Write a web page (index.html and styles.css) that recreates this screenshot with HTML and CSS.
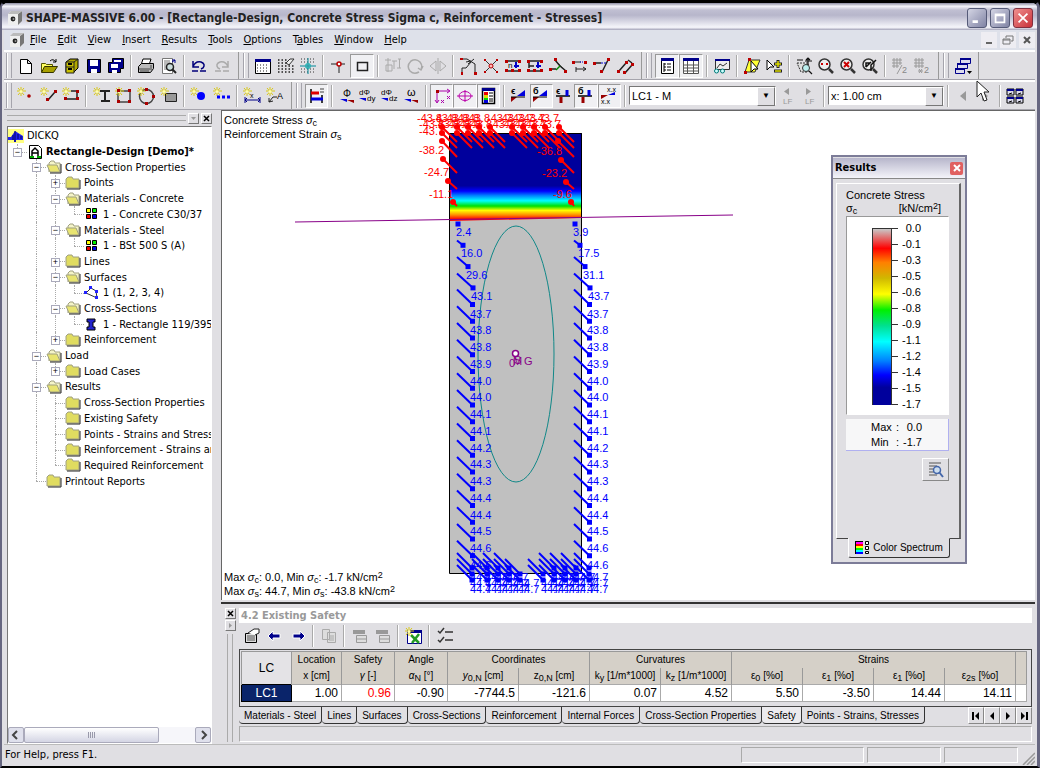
FILE: index.html
```
<!doctype html>
<html lang="en">
  <head>
    <meta charset="utf-8">
    <meta name="viewport" content="width=device-width, initial-scale=1">
    <link rel="stylesheet" href="styles.css">
    <title>SHAPE-MASSIVE 6.00</title>
  </head>
  <body>
    <!-- shared icon parts -->
    <svg class="defs" aria-hidden="true">
      <symbol id="app" viewBox="0 0 16 16"><path d="M1 4l3-3h11v9l-3 5H1z" fill="#eee"/><path d="M11 4l4-3v10l-4 4z" fill="#777"/><path d="M1 4l3-3h11l-4 3z" fill="#bbb"/><circle cx="6" cy="9" r="2.4" fill="#222"/><circle cx="6.500" cy="9" r="1" fill="#999"/></symbol>
      <symbol id="star" viewBox="0 0 18 18"><path d="M4 0v9M0 4h9M1 1l6 7M7 1L1 8" stroke="#d8c818"/><circle cx="4" cy="4.500" r="1.500" fill="#ffffb0"/></symbol>
      <symbol id="folder" viewBox="0 0 16 14"><path d="M1 12V3l2-2h4l1 2h6v9z" fill="#e0dc60" stroke="#a0a080"/><path d="M2 13h13V4" fill="none" stroke="#222"/></symbol>
      <symbol id="open" viewBox="0 0 16 14"><path d="M3 12V3l2-2h3l1 2h5v9" fill="#f4f4c8" stroke="#a0a080"/><path d="M1 5h10l3 7H4z" fill="#e8e470" stroke="#a0a080"/><path d="M4 13h11V4" fill="none" stroke="#222"/></symbol>
      <symbol id="material" viewBox="0 0 16 14"><g stroke="#000"><path d="M2.500 1.500h4v4h-4z" fill="#ff0"/><path d="M8.500 1.500h4v4h-4z" fill="#0e0"/><path d="M2.500 7.500h4v4h-4z" fill="#e00"/><path d="M8.500 7.500h4v4h-4z" fill="#00e"/></g></symbol>
      <symbol id="lens" viewBox="0 0 18 18"><circle cx="7.500" cy="7.500" r="5.500" fill="#eee" stroke="#333" stroke-width="1.500"/><path d="M12 12l4 4" stroke="#333" stroke-width="2.500"/></symbol>
    </svg>

    <div class="window">
      <header class="titlebar">
        <svg class="app-icon"><use href="#app"/></svg>
        <h1>SHAPE-MASSIVE 6.00 - [Rectangle-Design, Concrete Stress Sigma c, Reinforcement - Stresses]</h1>
        <button class="win" aria-label="Minimize"><svg viewBox="0 0 18 18"><path d="M4 13h6" stroke="#fff" stroke-width="3"/></svg></button>
        <button class="win" aria-label="Maximize"><svg viewBox="0 0 18 18"><path d="M4 5h10v9H4zM4 6h10" fill="none" stroke="#fff" stroke-width="2"/></svg></button>
        <button class="win close" aria-label="Close"><svg viewBox="0 0 18 18"><path d="M4 4l10 10M14 4L4 14" stroke="#fff" stroke-width="2"/></svg></button>
      </header>

      <nav class="menubar">
        <svg class="app-icon"><use href="#app"/></svg>
        <a href="#"><u>F</u>ile</a><a href="#"><u>E</u>dit</a><a href="#"><u>V</u>iew</a><a href="#"><u>I</u>nsert</a><a href="#"><u>R</u>esults</a><a href="#"><u>T</u>ools</a><a href="#"><u>O</u>ptions</a><a href="#">T<u>a</u>bles</a><a href="#"><u>W</u>indow</a><a href="#"><u>H</u>elp</a>
        <span class="mdi">
          <button aria-label="Minimize document"><svg viewBox="0 0 16 16"><path d="M5 11h6" stroke="#666" stroke-width="2"/></svg></button>
          <button aria-label="Restore document"><svg viewBox="0 0 16 16"><path d="M6 4h7v5h-2M6 4v2M3 7h7v5H3zM3 8h7" fill="none" stroke="#777"/></svg></button>
          <button aria-label="Close document"><svg viewBox="0 0 16 16"><path d="M5 5l6 6M11 5l-6 6" stroke="#555" stroke-width="2"/></svg></button>
        </span>
      </nav>

      <div class="toolrow">
        <div class="bar file-bar">
          <i class="grip"></i>
          <button aria-label="New"><svg viewBox="0 0 18 18"><path d="M3.500 2.500h7l4 4v10h-11zM10.500 2.500v4h4" fill="#fff" stroke="#000"/></svg></button>
          <button aria-label="Open"><svg viewBox="0 0 18 18"><path d="M1.500 15V6.500h4l1 1h6V10" fill="#ffff60" stroke="#555500"/><path d="M1.500 15.500l3-6h13l-4 6z" fill="#a8a000" stroke="#333300"/><path d="M10 4q3-3 6 1M16 2v3h-3" fill="none" stroke="#000"/></svg></button>
          <button aria-label="Archive"><svg viewBox="0 0 18 18"><path d="M4 5l4-3h8v9l-4 4H4z" fill="#b0a800" stroke="#000"/><path d="M4 5h8v11H4zM4 10h8M12 5l4-3" fill="#c8c000" stroke="#222"/><path d="M6 7h4M6 12h4" stroke="#000" stroke-width="2"/></svg></button>
          <button aria-label="Save"><svg viewBox="0 0 18 18"><path d="M2.500 2.500h13v13h-13z" fill="#00008b" stroke="#000"/><path d="M5 3h8v6H5zM6 12h6v4H6z" fill="#fff"/></svg></button>
          <button aria-label="Save all"><svg viewBox="0 0 18 18"><path d="M5.500 1.500h11v10h-3v4h-12v-10h4z" fill="#00008b" stroke="#000"/><path d="M7 3h7v2H7zM4 7h7v4H4zM5 13h5v3H5z" fill="#fff"/></svg></button>
          <i class="sep"></i>
          <button aria-label="Print"><svg viewBox="0 0 18 18"><path d="M6 2h8l-2 6H4z" fill="#fff" stroke="#000"/><path d="M1.500 9.500l3-3h12v5l-3 4h-12z" fill="#bbb" stroke="#000"/><path d="M2 12h11M14 8v5M3 14h9" stroke="#444"/></svg></button>
          <button aria-label="Preview"><svg viewBox="0 0 18 18"><path d="M2.500 1.500h10v15h-10z" fill="#fff" stroke="#777"/><path d="M4 4h6M4 6h6M4 8h3M4 10h3M4 12h3" stroke="#777"/><circle cx="10" cy="10" r="3.500" fill="#cdd" stroke="#222" stroke-width="1.500"/><path d="M12 12l4 4" stroke="#222" stroke-width="2"/><path d="M12 3h3v3M15 3l-3 2" stroke="#00008b" fill="none"/></svg></button>
          <i class="sep"></i>
          <button aria-label="Undo"><svg viewBox="0 0 18 18"><path d="M3 4v6h6M3 10q2-6 8-5q5 2 2 6l-2 1M2 14h6M10 14h6" fill="none" stroke="#00007a" stroke-width="1.500"/></svg></button>
          <button aria-label="Redo" disabled><svg viewBox="0 0 18 18"><path d="M15 4v6H9M15 10q-2-6-8-5q-5 2-2 6l2 1M2 14h6M10 14h6" fill="none" stroke="#aaa" stroke-width="1.500"/></svg></button>
        </div>
        <div class="bar edit-bar">
          <i class="grip"></i>
          <button aria-label="Grid window"><svg viewBox="0 0 18 18"><path d="M1.500 2.500h15v14h-15z" fill="#fff" stroke="#000"/><path d="M1 2h16v3H1z" fill="#00008b"/><path d="M3 8h12M3 11h12M3 14h12" stroke="#222" stroke-dasharray="1 2"/></svg></button>
          <button aria-label="Grid settings"><svg viewBox="0 0 18 18"><path d="M1 3h9M1 6h9M1 9h16M1 12h16M1 15h16" stroke="#222" stroke-width="1.500" stroke-dasharray="1.500 2"/><path d="M9 6l4-4 4 0-5 6z" fill="#eee" stroke="#333"/></svg></button>
          <button aria-label="Snap"><svg viewBox="0 0 18 18"><path d="M2 2h14M2 5h14M2 12h14M2 15h14" stroke="#333" stroke-dasharray="1 2"/><path d="M9 1v16M1 9h16" stroke="#089" /><path d="M7 7h4v4H7z" fill="none" stroke="#0aa"/></svg></button>
          <i class="sep"></i>
          <button aria-label="Node snap"><svg viewBox="0 0 18 18"><path d="M2 7h14M10 7v9" stroke="#222"/><circle cx="10" cy="7" r="2" fill="#fff" stroke="#b00" stroke-width="1.500"/></svg></button>
          <button class="on" aria-label="Rectangle"><svg viewBox="0 0 18 18"><path d="M4.500 5.500h10v8h-10z" fill="none" stroke="#222" stroke-width="1.500"/></svg></button>
          <i class="sep"></i>
          <button aria-label="Move" disabled><svg viewBox="0 0 18 18"><path d="M2 8h6v6H2zM1 3h6M4 1v14M8 4h5M10 4v8M14 2h3M15.500 2v9M13 11h4" fill="none" stroke="#aaa"/></svg></button>
          <button aria-label="Rotate" disabled><svg viewBox="0 0 18 18"><path d="M13 15q-5 3-9-1-4-5 1-10 5-3 9 1 3 4 1 7M12 11l3 2 2-4" fill="none" stroke="#aaa" stroke-width="1.500"/></svg></button>
          <button aria-label="Mirror" disabled><svg viewBox="0 0 18 18"><path d="M7 4L1 9l6 5zM11 4l6 5-6 5zM9 1v16" fill="none" stroke="#aaa"/></svg></button>
          <i class="sep"></i>
          <button aria-label="Connect"><svg viewBox="0 0 18 18"><path d="M2 2h6l8 5v9M3 16v-5h4l5-6M12 4l-5 1M9 7l6-5" fill="none" stroke="#222"/><path d="M1 1h3v2H1zM15 15h3v3h-3zM2 15h2v3H2z" fill="#b00"/></svg></button>
          <button aria-label="Intersect"><svg viewBox="0 0 18 18"><path d="M3 3l12 12M15 3L3 15" stroke="#333"/><path d="M2 2h2v2H2zM14 2h2v2h-2zM2 14h2v2H2zM14 14h2v2h-2z" fill="#b00"/><circle cx="9" cy="9" r="2" fill="#fbb" stroke="#b00"/></svg></button>
          <button aria-label="Divide by number"><svg viewBox="0 0 18 18"><path d="M2 4h14M2 14h14" stroke="#222" stroke-width="1.500"/><path d="M1 3h3v3H1zM14 3h3v3h-3zM1 12h3v3H1zM14 12h3v3h-3zM7 12h3v3H7z" fill="#b00"/><path d="M12 5v6M10 9h5" stroke="#00c" stroke-width="2"/><text x="4" y="11" font-size="8">n</text></svg></button>
          <button aria-label="Divide by distance"><svg viewBox="0 0 18 18"><path d="M2 4h14M2 14h14M3 6v5M3 9h5" stroke="#222" stroke-width="1.500"/><path d="M1 3h3v3H1zM14 3h3v3h-3zM1 12h3v3H1zM14 12h3v3h-3zM7 12h3v3H7z" fill="#b00"/><path d="M12 5v6M10 9h5" stroke="#00c" stroke-width="2"/></svg></button>
          <button aria-label="Fillet"><svg viewBox="0 0 18 18"><path d="M6 3l5 6 6 5M7 12H1" stroke="#222" stroke-width="1.500"/><path d="M11 9l-4 4" fill="none" stroke="#080" stroke-width="1.500"/><path d="M5 1h3v3H5zM15 13h3v3h-3zM0 11h3v3H0z" fill="#b00"/></svg></button>
          <button aria-label="Parallel"><svg viewBox="0 0 18 18"><path d="M2 5h8M5 10v5M5 12h10M12 10l3 2-3 2" stroke="#222" fill="none"/><path d="M9 5h5" stroke="#00c" stroke-dasharray="1 1"/><path d="M1 4h3v3H1zM13 4h3v3h-3z" fill="#b00"/></svg></button>
          <button aria-label="Extend"><svg viewBox="0 0 18 18"><path d="M2 6h6M15 3L9 15" stroke="#222" stroke-width="1.500"/><path d="M8 6h5" stroke="#00c" stroke-dasharray="2 1"/><path d="M0 5h3v3H0zM14 1h3v3h-3zM7 13h3v3H7z" fill="#b00"/></svg></button>
          <button aria-label="Offset"><svg viewBox="0 0 18 18"><path d="M3 14l7-8M9 16l7-8M12 3l4 3" stroke="#222" stroke-width="1.500"/><path d="M1 13h3v3H1zM9 4h3v3H9zM7 14h3v3H7zM15 6h3v3h-3z" fill="#b00"/></svg></button>
        </div>
        <div class="bar view-bar">
          <i class="grip"></i>
          <button class="on" aria-label="Navigator"><svg viewBox="0 0 18 18"><path d="M3.500 1.500h12v15h-12z" fill="#fff" stroke="#000"/><path d="M3 1h13v3H3z" fill="#00008b"/><path d="M6 6v9M6 7h2M9 7h4M6 10h2M9 10h4M6 13h2M9 13h4" stroke="#000"/></svg></button>
          <button class="on" aria-label="Tables"><svg viewBox="0 0 18 18"><path d="M1.500 1.500h15v15h-15zM5.500 4v12M11.500 4v12M2 8h14M2 11h14M2 14h14" fill="#fff" stroke="#555"/><path d="M1 1h16v3H1z" fill="#00008b"/></svg></button>
          <i class="sep"></i>
          <button aria-label="View options"><svg viewBox="0 0 18 18"><path d="M2.500 2.500h14v10h-14z" fill="#eee" stroke="#333"/><path d="M2 2h15v2H2z" fill="#00008b"/><path d="M4 11l3-4 3 2 4-3" fill="none" stroke="#333"/><circle cx="3.500" cy="14" r="2" fill="#cff" stroke="#077"/><circle cx="9.500" cy="14" r="2" fill="#cff" stroke="#077"/></svg></button>
          <i class="sep"></i>
          <button aria-label="Select"><svg viewBox="0 0 18 18"><path d="M2 15L6 3h11l-5 12z" fill="#ff3" stroke="#333"/><path d="M8 4v11l3-3h4z" fill="#fff" stroke="#000"/><path d="M1 14h3v3H1zM5 1h3v3H5z" fill="#b00"/></svg></button>
          <button aria-label="Add to selection"><svg viewBox="0 0 18 18"><path d="M2 3v10l3-3h4z" fill="#fff" stroke="#000"/><path d="M13 3v8M9 7h8M9 14h8" stroke="#222" stroke-width="3"/><path d="M13 4v6M10 7h6M10 14h6" stroke="#dd0" stroke-width="1.500"/></svg></button>
          <i class="sep"></i>
          <button aria-label="Pan"><svg viewBox="0 0 18 18"><path d="M2 6h11v9H6z" fill="#ddd" stroke="#333" stroke-dasharray="2 1"/><circle cx="11" cy="11" r="3.500" fill="#bee" stroke="#333"/><path d="M13 1v7M10 4h7M11 3l2-2 2 2M2 3h6M14 14l3 3" fill="none" stroke="#111" stroke-width="1.200"/></svg></button>
          <button aria-label="Zoom window"><svg viewBox="0 0 18 18"><use href="#lens"/><path d="M4 7h7" stroke="#c00" stroke-width="2" stroke-dasharray="2 3"/></svg></button>
          <button aria-label="Zoom out"><svg viewBox="0 0 18 18"><use href="#lens"/><path d="M5 5l5 5M10 5l-5 5" stroke="#c00" stroke-width="2"/></svg></button>
          <button aria-label="Previous view"><svg viewBox="0 0 18 18"><use href="#lens"/><path d="M5 10V6h4M5 10l5-5M15 3l-5 5v6" stroke="#111" stroke-width="1.500" fill="none"/></svg></button>
          <i class="sep"></i>
          <button aria-label="Half grid" disabled><svg viewBox="0 0 18 18"><path d="M1 3h10M1 6h10M1 9h7M3 1v10M6 1v10M9 1v7M11 8l-5 9" stroke="#999"/><text x="11" y="16" font-size="9" fill="#888">2</text></svg></button>
          <button aria-label="Double grid" disabled><svg viewBox="0 0 18 18"><path d="M1 3h10M1 6h10M1 9h10M3 1v10M6 1v10M9 1v10M5 14h5M6 12l3 4M9 12l-3 4" stroke="#999"/><text x="11" y="16" font-size="9" fill="#888">2</text></svg></button>
        </div>
        <div class="bar cascade-bar">
          <i class="grip"></i>
          <button aria-label="Windows"><svg viewBox="0 0 18 18"><g fill="#dde" stroke="#00008b"><path d="M6.500 1.500h10v5h-10z"/><path d="M3.500 6.500h10v5h-10z"/><path d="M1.500 11.500h9v5h-9z"/></g><path d="M6 2h11M3 7h11M1 12h10" stroke="#00008b" stroke-width="2"/><path d="M13 14h5l-2.500 3z"/></svg></button>
        </div>
      </div>

      <div class="toolrow">
        <div class="bar insert-bar">
          <i class="grip"></i>
          <button aria-label="New point"><svg viewBox="0 0 18 18"><use href="#star"/><circle cx="12" cy="9" r="1.800" fill="#a00"/></svg></button>
          <button aria-label="New line"><svg viewBox="0 0 18 18"><use href="#star"/><path d="M8 13l7-8" stroke="#222" stroke-width="1.500"/><path d="M6 11h3v3H6zM14 3h3v3h-3z" fill="#a00"/></svg></button>
          <button aria-label="New polyline"><svg viewBox="0 0 18 18"><use href="#star"/><path d="M9 4h6v8H4" fill="none" stroke="#222" stroke-width="1.500"/><path d="M14 3h3v3h-3zM14 10h3v3h-3zM2 10h3v3H2z" fill="#a00"/></svg></button>
          <i class="sep"></i>
          <button aria-label="New section"><svg viewBox="0 0 18 18"><use href="#star"/><path d="M7 4h10M12 4v10M8 14h9" stroke="#222" stroke-width="2"/></svg></button>
          <button aria-label="New rectangle"><svg viewBox="0 0 18 18"><path d="M3 4h12v11H3z" fill="none" stroke="#444" stroke-width="1.500"/><use href="#star"/><path d="M2 2h3v3H2zM13 2h3v3h-3zM2 13h3v3H2zM13 13h3v3h-3z" fill="#a00"/></svg></button>
          <button aria-label="New circle"><svg viewBox="0 0 18 18"><circle cx="9.500" cy="9.500" r="7" fill="none" stroke="#444" stroke-width="1.500"/><use href="#star"/><path d="M8 1h3v3H8zM8 15h3v3H8zM15 8h3v3h-3z" fill="#a00"/></svg></button>
          <button aria-label="New opening"><svg viewBox="0 0 18 18"><path d="M5.500 6.500h11v8h-11z" fill="#999" stroke="#222"/><use href="#star"/></svg></button>
          <i class="sep"></i>
          <button aria-label="New bar"><svg viewBox="0 0 18 18"><use href="#star"/><circle cx="11" cy="9" r="4" fill="#00f"/></svg></button>
          <button aria-label="New bar row"><svg viewBox="0 0 18 18"><use href="#star"/><path d="M4 10h14" stroke="#00f" stroke-width="3" stroke-dasharray="3 2"/></svg></button>
          <i class="sep"></i>
          <button aria-label="New dimension"><svg viewBox="0 0 18 18"><use href="#star"/><path d="M2 13h15M2 10v6M17 10v6M4 11l-2 2 2 2M15 11l2 2-2 2" fill="none" stroke="#008"/><text x="7" y="11" font-size="7">x</text></svg></button>
          <button aria-label="New comment"><svg viewBox="0 0 18 18"><use href="#star"/><path d="M3 15l4-5h4M3 15v-4M3 15l4-1" fill="none" stroke="#222"/><text x="11" y="12" font-size="9">A</text></svg></button>
        </div>
        <div class="bar result-bar">
          <i class="grip"></i>
          <div class="tools">
            <button class="on" aria-label="Results"><svg viewBox="0 0 18 18"><path d="M3 2v14M14 8v8" stroke="#000" stroke-width="1.500"/><path d="M3 6h8" stroke="#d00" stroke-width="3"/><path d="M3 12h12" stroke="#00d" stroke-width="3"/><path d="M12 2h4M12 5h4" stroke="#444"/></svg></button>
            <i class="sep"></i>
            <button aria-label="Phi"><svg viewBox="0 0 18 18"><text x="5" y="10" font-size="10">Φ</text><path d="M2 12h7v3z" fill="#00d"/><path d="M9 13l7 3v-3z" fill="#900"/></svg></button>
            <button aria-label="dPhi/dy"><svg viewBox="0 0 18 18"><text x="0" y="8" font-size="8">dΦ</text><text x="8" y="14" font-size="8">dy</text><path d="M0 11h7v3z" fill="#00d"/></svg></button>
            <button aria-label="dPhi/dz"><svg viewBox="0 0 18 18"><text x="0" y="8" font-size="8">dΦ</text><text x="8" y="14" font-size="8">dz</text><path d="M0 11h7v3z" fill="#00d"/></svg></button>
            <button aria-label="Omega"><svg viewBox="0 0 18 18"><text x="5" y="9" font-size="11">ω</text><path d="M2 12h7v3z" fill="#00d"/><path d="M9 13l7 3v-3z" fill="#900"/></svg></button>
            <i class="sep"></i>
            <button class="on" aria-label="Axes"><svg viewBox="0 0 18 18"><path d="M4 15V4h12M2 13l2 3 2-3M14 2l3 2-3 2M14 9l3 3M17 9l-3 3M8 13l3 3M11 13l-3 3" fill="none" stroke="#a0a"/><path d="M3 3h3v3H3z" fill="#a00"/></svg></button>
            <button class="on" aria-label="Ellipse"><svg viewBox="0 0 18 18"><ellipse cx="9" cy="9" rx="6" ry="4.500" fill="none" stroke="#b0a"/><path d="M1 9h16M9 3v12" stroke="#b0a"/></svg></button>
            <button class="on" aria-label="Panel"><svg viewBox="0 0 18 18"><path d="M3.500 1.500h12v15h-12z" fill="#fff" stroke="#000" stroke-width="1.500"/><path d="M3 1h13v3H3z" fill="#00008b"/><path d="M5 5h4v3H5z" fill="#e00"/><path d="M5 8h4v3H5z" fill="#dd0"/><path d="M5 11h4v2H5z" fill="#0d0"/><path d="M5 13h4v3H5z" fill="#00d"/><path d="M10 6h4M10 9h4M10 12h4M10 14h4" stroke="#000"/></svg></button>
            <i class="sep"></i>
            <button aria-label="Strain"><svg viewBox="0 0 18 18"><text x="1" y="7" font-size="9" font-weight="bold">ϵ</text><path d="M1 15v-5h6z" fill="#900"/><path d="M7 9l8-6v6z" fill="#00d"/><path d="M1 10h14"  stroke="#000"/></svg></button>
            <button class="on" aria-label="Stress"><svg viewBox="0 0 18 18"><text x="1" y="7" font-size="9" font-weight="bold">б</text><path d="M1 15v-5h6z" fill="#900"/><path d="M7 9l8-6v6z" fill="#00d"/><path d="M1 10h14"  stroke="#000"/></svg></button>
            <button aria-label="Steel strain"><svg viewBox="0 0 18 18"><text x="1" y="7" font-size="9" font-weight="bold">ϵ</text><path d="M1 9h14" stroke="#000" stroke-width="1.500"/><path d="M12 3v6" stroke="#00d" stroke-width="3"/><path d="M6 10v6" stroke="#900" stroke-width="3"/></svg></button>
            <button class="on" aria-label="Steel stress"><svg viewBox="0 0 18 18"><text x="1" y="7" font-size="9" font-weight="bold">б</text><path d="M1 9h14" stroke="#000" stroke-width="1.500"/><path d="M12 3v6" stroke="#00d" stroke-width="3"/><path d="M6 10v6" stroke="#900" stroke-width="3"/></svg></button>
            <button class="on" aria-label="Values"><svg viewBox="0 0 18 18"><text x="7" y="5" font-size="7">x.x</text><text x="1" y="17" font-size="7">x.x</text><path d="M1 12v-4h7z" fill="#900"/><path d="M8 8l7-3v3z" fill="#00d"/></svg></button>
          </div>
          <i class="sep"></i>
          <label class="combo case"><select aria-label="Load case"><option>LC1 - M</option></select></label>
          <button class="step" aria-label="Previous load case" disabled><svg viewBox="0 0 18 18"><path d="M11 1v7L6 4.500z" fill="#999"/><text x="5" y="17" font-size="8" fill="#999">LF</text></svg></button>
          <button class="step" aria-label="Next load case" disabled><svg viewBox="0 0 18 18"><path d="M6 1v7l5-3.500z" fill="#999"/><text x="5" y="17" font-size="8" fill="#999">LF</text></svg></button>
          <i class="sep"></i>
          <label class="combo loc"><select aria-label="Location"><option>x: 1.00 cm</option></select></label>
          <i class="sep"></i>
          <button class="step" aria-label="Previous location" disabled><svg viewBox="0 0 18 18"><path d="M12 4v10L6 9z" fill="#999"/></svg></button>
          <button class="step" aria-label="Next location" disabled><svg viewBox="0 0 18 18"><path d="M6 4v10l6-5z" fill="#999"/></svg></button>
          <i class="sep"></i>
          <button class="step" aria-label="Result tables"><svg viewBox="0 0 18 18"><path d="M1 2h7v6H1zM10 2h7v6h-7zM1 10h7v6H1zM10 10h7v6h-7z" fill="#dde" stroke="#000"/><path d="M1 3h7M10 3h7M1 11h7M10 11h7" stroke="#00008b" stroke-width="2"/><path d="M3 7l3-1M12 7l3-1M3 15l3-1M12 15l3-1" stroke="#000"/></svg></button>
        </div>
      </div>

      <main>
        <aside class="navigator">
          <div class="dock"><i></i><button aria-label="Menu" disabled><svg viewBox="0 0 9 9"><path d="M2 3h5L4.500 6z" fill="#999"/></svg></button><button aria-label="Close navigator"><svg viewBox="0 0 9 9"><path d="M2 2l5 5M7 2L2 7" stroke="#000" stroke-width="1.500"/></svg></button></div>
          <div class="tree-box">
            <ul class="tree">
              <li><svg class="ico" viewBox="0 0 16 14"><path d="M0 0h16v14H0z" fill="#ffff80"/><path d="M0 8h3l4-6 8 5v4H8v2H6v-2H0z" fill="#22e"/><path d="M5 11V6M7 13V2M10 10V5M13 10V7" stroke="#006"/></svg>DICKQ</li>
              <li class="bold"><i class="cell el"><b class="box">−</b></i><svg class="ico" viewBox="0 0 16 14"><path d="M2.500.500h9l3 3v10h-12z" fill="#fff" stroke="#000"/><path d="M5 12V6l3-3 3 3v6M5 8h6" fill="none" stroke="#000" stroke-width="1.500"/><path d="M3 12h4M10 12h4" stroke="#0a0" stroke-width="2"/></svg>Rectangle-Design [Demo]*</li>
              <li><i class="cell"></i><i class="cell tee"><b class="box">−</b></i><svg class="ico"><use href="#open"/></svg>Cross-Section Properties</li>
              <li><i class="cell"></i><i class="cell v"></i><i class="cell tee"><b class="box">+</b></i><svg class="ico"><use href="#folder"/></svg>Points</li>
              <li><i class="cell"></i><i class="cell v"></i><i class="cell tee"><b class="box">−</b></i><svg class="ico"><use href="#open"/></svg>Materials - Concrete</li>
              <li><i class="cell"></i><i class="cell v"></i><i class="cell v"></i><i class="cell el"></i><svg class="ico"><use href="#material"/></svg>1 - Concrete C30/37</li>
              <li><i class="cell"></i><i class="cell v"></i><i class="cell tee"><b class="box">−</b></i><svg class="ico"><use href="#open"/></svg>Materials - Steel</li>
              <li><i class="cell"></i><i class="cell v"></i><i class="cell v"></i><i class="cell el"></i><svg class="ico"><use href="#material"/></svg>1 - BSt 500 S (A)</li>
              <li><i class="cell"></i><i class="cell v"></i><i class="cell tee"><b class="box">+</b></i><svg class="ico"><use href="#folder"/></svg>Lines</li>
              <li><i class="cell"></i><i class="cell v"></i><i class="cell tee"><b class="box">−</b></i><svg class="ico"><use href="#open"/></svg>Surfaces</li>
              <li><i class="cell"></i><i class="cell v"></i><i class="cell v"></i><i class="cell el"></i><svg class="ico" viewBox="0 0 16 14"><path d="M2 7l5-5 5 3 1 7z" fill="#fff" stroke="#333"/><path d="M0 5h3v3H0zM5 0h3v3H5zM11 4h3v3h-3zM11 10h3v3h-3z" fill="#22f"/></svg>1 (1, 2, 3, 4)</li>
              <li><i class="cell"></i><i class="cell v"></i><i class="cell tee"><b class="box">−</b></i><svg class="ico"><use href="#open"/></svg>Cross-Sections</li>
              <li><i class="cell"></i><i class="cell v"></i><i class="cell v"></i><i class="cell el"></i><svg class="ico" viewBox="0 0 16 14"><path d="M3 2h8v3H9v5h2v3H3v-3h2V5H3z" fill="#22c" stroke="#000"/></svg>1 - Rectangle 119/395</li>
              <li><i class="cell"></i><i class="cell v"></i><i class="cell el"><b class="box">+</b></i><svg class="ico"><use href="#folder"/></svg>Reinforcement</li>
              <li><i class="cell"></i><i class="cell tee"><b class="box">−</b></i><svg class="ico"><use href="#open"/></svg>Load</li>
              <li><i class="cell"></i><i class="cell v"></i><i class="cell el"><b class="box">+</b></i><svg class="ico"><use href="#folder"/></svg>Load Cases</li>
              <li><i class="cell"></i><i class="cell tee"><b class="box">−</b></i><svg class="ico"><use href="#open"/></svg>Results</li>
              <li><i class="cell"></i><i class="cell v"></i><i class="cell tee"></i><svg class="ico"><use href="#folder"/></svg>Cross-Section Properties</li>
              <li><i class="cell"></i><i class="cell v"></i><i class="cell tee"></i><svg class="ico"><use href="#folder"/></svg>Existing Safety</li>
              <li><i class="cell"></i><i class="cell v"></i><i class="cell tee"></i><svg class="ico"><use href="#folder"/></svg>Points - Strains and Stresses</li>
              <li><i class="cell"></i><i class="cell v"></i><i class="cell tee"></i><svg class="ico"><use href="#folder"/></svg>Reinforcement - Strains and Stresses</li>
              <li><i class="cell"></i><i class="cell v"></i><i class="cell el"></i><svg class="ico"><use href="#folder"/></svg>Required Reinforcement</li>
              <li><i class="cell"></i><i class="cell el"></i><svg class="ico"><use href="#folder"/></svg>Printout Reports</li>
            </ul>
            <div class="scroll">
              <button aria-label="Scroll left"><svg viewBox="0 0 12 12"><path d="M7 2L3 6l4 4" fill="none" stroke="#444" stroke-width="2"/></svg></button>
              <span class="track"><span class="thumb"></span></span>
              <button aria-label="Scroll right"><svg viewBox="0 0 12 12"><path d="M5 2l4 4-4 4" fill="none" stroke="#444" stroke-width="2"/></svg></button>
            </div>
          </div>
        </aside>

        <div class="work">
          <section class="canvas">
            <div class="note">Concrete Stress <i>σ</i><sub>c</sub><br>Reinforcement Strain <i>σ</i><sub>s</sub></div>
            <svg class="drawing" role="img" aria-label="Concrete and reinforcement stresses">
              <defs>
                <linearGradient id="stress" x1="0" y1="0" x2="0" y2="1">
                  <stop offset=".6" stop-color="#00009c"/><stop offset=".66" stop-color="#0000ff"/><stop offset=".71" stop-color="#0080ff"/><stop offset=".77" stop-color="#00ffff"/><stop offset=".83" stop-color="#00e000"/><stop offset=".88" stop-color="#ffff00"/><stop offset=".93" stop-color="#ff9000"/><stop offset=".98" stop-color="#ff0000"/>
                </linearGradient>
              </defs>
              <g transform="translate(-222 -111)">
                <path d="M449 133h133v440H449z" fill="#c0c0c0"/>
                <path d="M449 133h133v85l-133 3z" fill="url(#stress)"/>
                <path d="M449.500 133.500h132v440h-132z" fill="none" stroke="#000"/>
                <path d="M295 222l438-7" stroke="#808"/>
                <ellipse cx="516" cy="354" rx="38" ry="128" fill="none" stroke="#188"/>
                <g id="bars"></g>
                <g fill="#808"><text x="509" y="367">0</text><text x="513" y="365">M</text><text x="514" y="364">S</text><text x="524" y="365">G</text></g>
                <circle cx="515.500" cy="353.500" r="3" fill="#fff" stroke="#808" stroke-width="1.500"/>
              </g>
            </svg>
            <div class="note">Max <i>σ</i><sub>c</sub>: 0.0, Min <i>σ</i><sub>c</sub>: -1.7 kN/cm<sup>2</sup><br>Max <i>σ</i><sub>s</sub>: 44.7, Min <i>σ</i><sub>s</sub>: -43.8 kN/cm<sup>2</sup></div>

            <aside class="results">
              <header><h2>Results</h2><button aria-label="Close results"><svg viewBox="0 0 12 12"><path d="M3 3l6 6M9 3L3 9" stroke="#fff" stroke-width="2"/></svg></button></header>
              <div class="page">
                <div class="quantity">Concrete Stress<div><span>σ<sub>c</sub></span><span>[kN/cm<sup>2</sup>]</span></div></div>
                <div class="legend">
                  <span class="spectrum"></span>
                  <ul><li>0.0</li><li>-0.1</li><li>-0.3</li><li>-0.5</li><li>-0.6</li><li>-0.8</li><li>-0.9</li><li>-1.1</li><li>-1.2</li><li>-1.4</li><li>-1.5</li><li>-1.7</li></ul>
                </div>
                <dl class="range"><dt>Max</dt><dd>:</dd><dd>0.0</dd><dt>Min</dt><dd>:</dd><dd>-1.7</dd></dl>
                <button class="inspect" aria-label="Details"><svg viewBox="0 0 18 18"><path d="M2 2h12M2 5h8M2 8h5M2 11h5M2 14h8" stroke="#555"/><circle cx="10" cy="9" r="3.500" fill="#cde" stroke="#46a" stroke-width="1.500"/><path d="M12 11l4 5" stroke="#46a" stroke-width="2"/></svg></button>
              </div>
              <button class="page-tab"><svg viewBox="0 0 14 14"><path d="M0 0h8v13H0z"/><path d="M1 1h7v2H1z" fill="#f0f"/><path d="M1 3h7v2H1z" fill="#f00"/><path d="M1 5h7v2H1z" fill="#ff0"/><path d="M1 7h7v2H1z" fill="#0f0"/><path d="M1 9h7v2H1z" fill="#0ff"/><path d="M1 11h7v2H1z" fill="#00f"/><path d="M10.500.500h3v3h-3zM10.500 5.500h3v3h-3zM10.500 10.500h3v2h-3z" fill="#fff" stroke="#000"/></svg>Color Spectrum</button>
            </aside>
          </section>

          <section class="tables">
            <div class="gutter"><button aria-label="Close table"><svg viewBox="0 0 9 9"><path d="M2 2l5 5M7 2L2 7" stroke="#000" stroke-width="1.500"/></svg></button><button aria-label="Expand" disabled><svg viewBox="0 0 9 9"><path d="M3 2v5l3-2.500z" fill="#999"/></svg></button><i></i></div>
            <div class="tables-body">
              <h2>4.2 Existing Safety</h2>
              <div class="table-tools">
                <button aria-label="Properties"><svg viewBox="0 0 18 18"><path d="M2.500 6.500h11v9h-11z" fill="#ddd" stroke="#000"/><path d="M4 9h8M4 11h8M4 13h8" stroke="#555"/><path d="M5 6l6-4h5v4l-4 2" fill="#fff" stroke="#222"/></svg></button>
                <button aria-label="Previous table"><svg viewBox="0 0 18 18"><path d="M2 9l5-5v3h7v4H7v3z" fill="#00008b" stroke="#fff"/></svg></button>
                <button aria-label="Next table"><svg viewBox="0 0 18 18"><path d="M16 9l-5-5v3H4v4h7v3z" fill="#00008b" stroke="#fff"/></svg></button>
                <i class="sep"></i>
                <button aria-label="Copy" disabled><svg viewBox="0 0 18 18"><path d="M2.500 2.500h7v10h-7zM7.500 5.500h8v10h-8zM9 9h5M9 11h5M9 13h5" fill="#ddd" stroke="#aaa"/></svg></button>
                <i class="sep"></i>
                <button aria-label="Insert row" disabled><svg viewBox="0 0 18 18"><path d="M2 3h12v4H2z" fill="#999"/><path d="M5.500 8.500h10v7h-10zM5 12h11" fill="#ddd" stroke="#999"/></svg></button>
                <button aria-label="Delete row" disabled><svg viewBox="0 0 18 18"><path d="M2 3h12v4H2z" fill="#999"/><path d="M5.500 8.500h10v7h-10zM5 12h11" fill="#ddd" stroke="#999"/></svg></button>
                <i class="sep"></i>
                <button aria-label="Export to spreadsheet"><svg viewBox="0 0 18 18"><path d="M2.500 3.500h14v13h-14z" fill="#fff" stroke="#00008b"/><path d="M4 3h13v3H4z" fill="#00008b"/><path d="M6 8l8 8M14 7l-7 9" stroke="#292" stroke-width="2.500"/><use href="#star"/></svg></button>
                <i class="sep"></i>
                <button aria-label="Settings"><svg viewBox="0 0 18 18"><path d="M2 4l2 2 4-5M2 13l2 2 4-5M9 5h8M9 13h8" fill="none" stroke="#333" stroke-width="1.500"/></svg></button>
              </div>
              <div class="grid-box">
                <table>
                  <colgroup><col class="w50"><col class="w50"><col class="w53"><col class="w53"><col span="8" class="w71"><col></colgroup>
                  <thead>
                    <tr><th rowspan="2" class="lc">LC</th><th>Location</th><th>Safety</th><th>Angle</th><th colspan="2">Coordinates</th><th colspan="2">Curvatures</th><th colspan="4">Strains</th><th></th></tr>
                    <tr><th>x [cm]</th><th><i>γ</i> [-]</th><th><i>α</i><sub>N</sub> [°]</th><th><i>y</i><sub>0,N</sub> [cm]</th><th>z<sub>0,N</sub> [cm]</th><th>k<sub>y</sub> [1/m*1000]</th><th>k<sub>z</sub> [1/m*1000]</th><th>ε<sub>0</sub> [%o]</th><th>ε<sub>1</sub> [%o]</th><th>ε<sub>1</sub> [%o]</th><th>ε<sub>2s</sub> [%o]</th><th></th></tr>
                  </thead>
                  <tbody>
                    <tr><th>LC1</th><td>1.00</td><td class="bad">0.96</td><td>-0.90</td><td>-7744.5</td><td>-121.6</td><td>0.07</td><td>4.52</td><td>5.50</td><td>-3.50</td><td>14.44</td><td>14.11</td><td></td></tr>
                  </tbody>
                </table>
              </div>
              <div class="tabs">
                <button>Materials - Steel</button><button>Lines</button><button>Surfaces</button><button>Cross-Sections</button><button>Reinforcement</button><button>Internal Forces</button><button>Cross-Section Properties</button><button class="current">Safety</button><button>Points - Strains, Stresses</button>
                <span class="pager">
                  <button aria-label="First"><svg viewBox="0 0 12 12"><path d="M3 2v8" stroke="#000" stroke-width="2"/><path d="M9 2v8L5 6z"/></svg></button>
                  <button aria-label="Previous"><svg viewBox="0 0 12 12"><path d="M8 2v8L4 6z"/></svg></button>
                  <button aria-label="Next"><svg viewBox="0 0 12 12"><path d="M4 2v8l4-4z"/></svg></button>
                  <button aria-label="Last"><svg viewBox="0 0 12 12"><path d="M9 2v8" stroke="#000" stroke-width="2"/><path d="M3 2v8l4-4z"/></svg></button>
                </span>
              </div>
              <div class="info"></div>
            </div>
          </section>
        </div>
      </main>

      <footer class="status"><p>For Help, press F1.</p><i class="wide"></i><i></i><i></i>
        <svg viewBox="0 0 14 14"><path d="M2 14L14 2M6 14l8-8M10 14l4-4" stroke="#999" stroke-width="1.500"/></svg>
      </footer>
      <svg class="pointer" viewBox="0 0 14 22"><path d="M1 1v16l4-4 3 8 3-1-3-8h5z" fill="#fff" stroke="#222"/></svg>
    </div>

    <script>
      "use strict";
      var bars = document.getElementById('bars');
      var html = '';

      // one reinforcement bar: a stress line from the steel layer to its end mark
      function addBar(color, x1, y1, x2, y2, label, lx, ly) {
        html += '<path d="M' + x1 + ' ' + y1 + 'L' + x2 + ' ' + y2 + '" stroke="' + color + '" stroke-width="2"/>';
        html += color === 'red'
          ? '<circle cx="' + x2 + '" cy="' + y2 + '" r="3" fill="red"/>'
          : '<rect x="' + (x2 - 2.5) + '" y="' + (y2 - 2.5) + '" width="5" height="5" fill="' + color + '"/>';
        if (label) {
          html += '<text x="' + lx + '" y="' + ly + '" fill="' + color + '">' + label + '</text>';
        }
      }

      // tension side
      var tension = ['43.7', '43.8', '43.8', '43.9', '44.0', '44.0', '44.1', '44.1', '44.2', '44.3', '44.3', '44.4', '44.4', '44.5', '44.6', '44.6'];
      [[457, ['2.4', '16.0', '29.6', '43.1']], [574, ['3.9', '17.5', '31.1', '43.7']]].forEach(function(side) {
        var x = side[0];
        side[1].forEach(function(label, i) {
          addBar('blue', x, 224 + i * 16.5, x + 1 + i * 5, 224 + i * 21.3, label, x + i * 5 - 1, 236 + i * 21.3);
        });
        tension.forEach(function(label, i) {
          var y = 304.5 + i * 16.75;
          addBar('blue', x, y - 15, x + 15.5, y, label, x + 13, y + 13);
        });
      });
      [457, 472, 483, 494, 505, 528, 539, 550, 561, 574].forEach(function(x, i) {
        [553, 559, 565].forEach(function(y, row) {
          if (row === 0 && (i === 4 || i === 5)) {
            return;
          }
          addBar('blue', x, y, x + 15, y + 15, '44.7', x + 13, y + 28);
        });
      });

      // compression side
      [457, 472, 483, 494, 505, 527, 538, 549, 560, 574].forEach(function(x, i) {
        [142, 148].forEach(function(y, row) {
          addBar('red', x, y, x - 15, y - 15, i < 5 ? '-43.8' : '-43.7', x - 40 + row * 2, y - 20);
        });
      });
      addBar('red', 457, 157, 442, 141, '-43.7', 419, 135);
      addBar('red', 574, 157, 558, 141);
      addBar('red', 457, 173, 443, 159, '-38.2', 419, 154);
      addBar('red', 457, 189, 448, 181, '-24.7', 424, 176);
      addBar('red', 457, 206, 453, 202, '-11.1', 429, 198);
      addBar('red', 574, 173, 561, 160, '-36.8', 537, 155);
      addBar('red', 574, 189, 566, 182, '-23.2', 542, 177);
      addBar('red', 574, 206, 571, 202, '-9.6', 553, 198);
      bars.innerHTML = html;
    </script>
  </body>
</html>
```
FILE: styles.css
```
* {
  box-sizing: border-box;
}
body {
  margin: 0;
  background: #000;
  font: 11px/16px Tahoma, "DejaVu Sans Condensed", "Liberation Sans", sans-serif;
  color: #000;
}
button {
  font: inherit;
  color: inherit;
  border: 0;
  background: none;
  padding: 0;
  display: flex;
  align-items: center;
  justify-content: center;
}
h1, h2, ul, dl, dd, p {
  margin: 0;
  padding: 0;
  list-style: none;
}
svg {
  display: block;
  flex: none;
}
sub, sup {
  font-size: 9px;
  line-height: 0;
}
sub {
  vertical-align: -2px;
}
sup {
  vertical-align: 3px;
}
.defs {
  position: absolute;
  width: 0;
  height: 0;
}
.window {
  position: relative;
  height: 100vh;
  display: flex;
  flex-direction: column;
  background: #e0dfe3;
  border: 2px solid #666680;
  border-width: 3px 3px 2px 2px;
  border-top-color: #000;
  border-bottom-color: #000;
  border-radius: 8px 8px 0 0;
  padding: 0 2px 1px;
  overflow: hidden;
}

/* title and menu */
.titlebar {
  height: 27px;
  margin: 0 -2px;
  padding: 2px 4px 0 5px;
  display: flex;
  align-items: center;
  gap: 3px;
  background: linear-gradient(#8a8aa0, #f4f4fa 12%, #c0bfd2 26%, #b7b6cb 45%, #f6f6fb 90%, #a3a2b8);
}
.titlebar h1 {
  flex: 1;
  font: bold 12px/20px "DejaVu Sans Condensed", sans-serif;
  color: #222;
  white-space: nowrap;
  overflow: hidden;
}
.app-icon {
  width: 16px;
  height: 16px;
}
.win {
  width: 20px;
  height: 20px;
  border: 1px solid #555a78;
  border-radius: 3px;
  background: linear-gradient(135deg, #d4d5e4, #8083a4);
}
.win svg {
  width: 16px;
  height: 16px;
}
.win.close {
  background: linear-gradient(135deg, #f09090, #c83038);
  border-color: #803040;
}
.menubar {
  height: 20px;
  padding-left: 5px;
  display: flex;
  align-items: center;
  gap: 11px;
  background: #dee1ea;
}
.menubar .app-icon {
  margin-right: -6px;
}
.menubar a {
  color: #000;
  text-decoration: none;
}
.mdi {
  margin-left: auto;
  display: flex;
  gap: 3px;
}
.mdi button {
  width: 16px;
  height: 16px;
  background: #eeedf2;
}

/* toolbars */
.toolrow {
  display: flex;
  gap: 2px;
  height: 30px;
  border-top: 2px solid #fff;
  border-bottom: 1px solid #a5a4ac;
  font-family: "Liberation Sans", sans-serif;
}
.bar {
  display: flex;
  align-items: center;
  padding-right: 5px;
  border-right: 1px solid #999;
}
.bar button, .tools button {
  flex: 1;
  min-width: 0;
  height: 24px;
}
.bar svg, .table-tools svg {
  width: 18px;
  height: 18px;
}
.bar .on {
  background: #f0f0f3;
  border: 1px solid #999;
  border-color: #999 #fff #fff #999;
}
.grip {
  width: 6px;
  height: 25px;
  margin: 0 3px 0 2px;
  border: solid #a5a4ac;
  border-width: 0 1px;
  box-shadow: inset 1px 0 #fff;
}
.sep {
  flex: none;
  width: 2px;
  height: 22px;
  margin: 0 3px;
  background: linear-gradient(90deg, #aaa 50%, #fff 50%);
}
.file-bar { width: 235px; }
.edit-bar { width: 401px; }
.view-bar { width: 295px; }
.cascade-bar { width: 38px; }
.insert-bar { width: 288px; }
.result-bar {
  flex: 1;
  border: 0;
}
.tools {
  width: 316px;
  display: flex;
  align-items: center;
}
.bar .step {
  flex: 0 0 22px;
}
.combo {
  position: relative;
  height: 19px;
  border: 1px solid #777;
  border-color: #777 #fff #fff #777;
  background: #fff;
}
.combo select {
  appearance: none;
  display: block;
  width: 100%;
  height: 17px;
  padding: 0 2px;
  border: 0;
  background: none;
  font: 11px/16px "Liberation Sans", sans-serif;
  color: #000;
}
.combo::after {
  content: "▼";
  position: absolute;
  right: 0;
  top: 0;
  width: 16px;
  height: 17px;
  border: 1px solid #888;
  border-color: #fff #777 #777 #fff;
  background: #e0dfe3;
  font-size: 8px;
  line-height: 16px;
  text-align: center;
  pointer-events: none;
}
.case { width: 147px; }
.loc { width: 116px; }

/* navigator */
main {
  flex: 1;
  min-height: 0;
  display: flex;
  gap: 9px;
}
.navigator {
  width: 208px;
  padding-left: 3px;
  display: flex;
  flex-direction: column;
}
.dock {
  height: 16px;
  display: flex;
  align-items: center;
  gap: 2px;
}
.dock i {
  flex: 1;
  height: 6px;
  border: solid #aaa;
  border-width: 1px 0;
}
.dock button, .gutter button {
  width: 11px;
  height: 11px;
  border: 1px solid #777;
  border-color: #fff #777 #777 #fff;
}
.dock svg, .gutter svg {
  width: 9px;
  height: 9px;
}
.tree-box {
  flex: 1;
  min-height: 0;
  display: flex;
  flex-direction: column;
  background: #fff;
  border: 1px solid #777;
  border-color: #777 #fff #fff #777;
}
.tree {
  height: 362px;
  padding-top: 1px;
  display: grid;
  grid-auto-rows: 1fr;
  overflow: hidden;
}
.tree li {
  display: flex;
  align-items: center;
  min-height: 0;
  white-space: nowrap;
  line-height: 15px;
}
.tree .bold {
  font-weight: bold;
}
.ico {
  width: 16px;
  height: 14px;
  margin-right: 3px;
}
.cell {
  flex: none;
  position: relative;
  width: 19px;
  align-self: stretch;
}
.cell::before {
  content: "";
  position: absolute;
  left: 9px;
  top: 0;
  bottom: 0;
}
.v::before, .tee::before, .el::before {
  border-left: 1px dotted #aaa;
}
.el::before {
  bottom: 50%;
}
.tee::after, .el::after {
  content: "";
  position: absolute;
  left: 9px;
  right: 0;
  top: 50%;
  border-top: 1px dotted #aaa;
}
.box {
  position: absolute;
  z-index: 1;
  left: 5px;
  top: 4px;
  width: 9px;
  height: 9px;
  border: 1px solid #aab;
  background: #fff;
  font: 9px/7px "Liberation Sans", sans-serif;
  text-align: center;
}
.scroll {
  margin-top: auto;
  height: 16px;
  display: flex;
  background: #f6f6fa;
}
.scroll button {
  width: 16px;
  border: 1px solid #aab;
  border-radius: 2px;
  background: #dfe0ec;
}
.scroll svg {
  width: 12px;
  height: 12px;
}
.track {
  flex: 1;
}
.thumb {
  display: block;
  width: 79%;
  height: 16px;
  border: 1px solid #aab;
  border-radius: 2px;
  background: repeating-linear-gradient(90deg, #99a 0 1px, transparent 1px 2px) center / 8px 6px no-repeat, linear-gradient(#fff, #d4d5e4);
}

/* drawing */
.work {
  flex: 1;
  min-width: 0;
  display: flex;
  flex-direction: column;
}
.canvas {
  flex: 1;
  min-height: 0;
  position: relative;
  display: flex;
  flex-direction: column;
  justify-content: space-between;
  padding: 2px;
  background: #fff;
  border: 1px solid #666;
  border-width: 1px 0 0 1px;
  font: 11px/14px "Liberation Sans", sans-serif;
}
.note {
  z-index: 1;
}
.drawing {
  position: absolute;
  left: 0;
  top: 0;
  width: 100%;
  height: 100%;
}
.results {
  position: absolute;
  z-index: 1;
  right: 68px;
  top: 44px;
  width: 136px;
  padding: 1px 4px 4px 3px;
  background: #e0dfe3;
  border: 2px solid #7c7c98;
  font: 11px/14px "Liberation Sans", sans-serif;
}
.results header {
  height: 21px;
  margin: 0 -4px 0 -3px;
  padding: 0 2px;
  display: flex;
  align-items: center;
  justify-content: space-between;
  background: linear-gradient(#b7b6cb, #f4f4fa);
  border-bottom: 1px solid #888;
}
.results h2 {
  font: bold 11px/16px Tahoma, "DejaVu Sans Condensed", sans-serif;
}
.results header button {
  width: 13px;
  height: 13px;
  border-radius: 2px;
  background: #e06060;
}
.results header svg {
  width: 12px;
  height: 12px;
}
.page {
  margin-top: 4px;
  height: 356px;
  padding: 5px 10px 0 9px;
  border: 1px solid #fff;
  border-right: 2px solid #666;
  border-bottom: 1px solid #444;
}
.quantity {
  line-height: 13px;
}
.quantity div {
  display: flex;
  justify-content: space-between;
  padding-right: 8px;
}
.legend {
  display: flex;
  height: 199px;
  margin-top: 1px;
  padding: 3px 0 0 25px;
  background: #fff;
  border: 1px solid #999;
  border-color: #999 #fff #fff #999;
}
.spectrum {
  width: 20px;
  height: 177px;
  margin-top: 8px;
  border: 1px solid #333;
  border-width: 1px 1px 0;
  background: linear-gradient(#c8c8c8, #ff0000 11%, #ff8000 19%, #d0b800 28%, #ffff00 37%, #00f000 46%, #00e090 55%, #00ffff 64%, #0080ff 75%, #0000ff 83%, #00009c 90%);
}
.legend li {
  display: flex;
  align-items: center;
  justify-content: flex-end;
  width: 29px;
  height: 16px;
}
.legend li::before {
  content: "";
  width: 6px;
  margin-right: auto;
  border-top: 1px solid #333;
}
.range {
  display: grid;
  grid-template-columns: 25px 6px 20px;
  margin-top: 4px;
  height: 32px;
  padding: 1px 0 0 25px;
  line-height: 15px;
  background: #f7f7f8;
  border: solid #b0b0f0;
  border-width: 0 1px 1px 0;
}
.range dd:nth-of-type(even) {
  text-align: right;
}
.inspect {
  width: 27px;
  height: 23px;
  margin: 7px 0 0 auto;
  border: 1px solid #888;
  border-color: #fff #888 #888 #fff;
}
.inspect svg {
  width: 18px;
  height: 18px;
}
.page-tab {
  position: relative;
  width: 102px;
  height: 20px;
  margin: -1px 0 0 12px;
  gap: 4px;
  background: #e0dfe3;
  border: 1px solid #333;
  border-color: #e0dfe3 #333 #333 #fff;
  border-radius: 0 0 3px 3px;
  font-size: 10px;
  white-space: nowrap;
}
.page-tab svg {
  width: 14px;
  height: 14px;
}

/* tables */
.tables {
  display: flex;
  border-top: 2px solid #333;
  margin-top: 2px;
  padding: 4px 3px 2px 4px;
}
.gutter {
  width: 14px;
  display: flex;
  flex-direction: column;
  gap: 1px;
}
.gutter i {
  flex: 1;
  width: 6px;
  margin: 2px 0 0 2px;
  border: solid #aaa;
  border-width: 0 1px;
}
.tables-body {
  flex: 1;
  min-width: 0;
}
.tables h2 {
  padding-left: 2px;
  background: #fff;
  color: #999;
  font: bold 11px/15px Tahoma, "DejaVu Sans Condensed", sans-serif;
}
.table-tools {
  height: 26px;
  padding-left: 1px;
  display: flex;
  align-items: center;
}
.table-tools button {
  width: 23px;
  height: 22px;
}
.grid-box {
  padding: 1px 4px 4px 1px;
  border: 1px solid #444;
  background: #e0dfe3;
}
table {
  width: 100%;
  table-layout: fixed;
  border-collapse: collapse;
  border: 1px solid #999;
  font: 10px/16px "Liberation Sans", sans-serif;
}
th, td {
  height: 16px;
  padding: 0;
  font-weight: normal;
  white-space: nowrap;
}
th {
  background: #d5d0c8;
  border-left: 1px solid #999;
}
.lc {
  background: #e4e3e6;
  font-size: 12px;
}
td {
  padding-right: 3px;
  background: #fff;
  border: 1px solid #aaa;
  text-align: right;
  font-size: 12px;
}
tbody th {
  background: #0a246a;
  border: 1px solid #000;
  color: #fff;
  font-size: 12px;
}
.bad {
  color: #f00;
}
.w50 { width: 50px; }
.w53 { width: 53px; }
.w71 { width: 71px; }
.tabs {
  display: flex;
  height: 17px;
  font: 10px/15px "Liberation Sans", sans-serif;
}
.tabs > button {
  padding: 0 5px;
  border: 1px solid #333;
  border-width: 0 1px 1px 0;
  border-radius: 0 0 4px 4px;
  white-space: nowrap;
}
.tabs > .current {
  background: #ecebee;
}
.pager {
  margin-left: auto;
  display: flex;
}
.pager button {
  width: 16px;
  border: 1px solid #888;
  border-color: #fff #888 #888 #fff;
}
.pager svg {
  width: 12px;
  height: 12px;
}
.info {
  height: 16px;
  margin-top: 2px;
  border: 1px solid #aaa;
  border-color: #aaa #fff #fff #aaa;
}

/* status bar */
.status {
  height: 21px;
  padding-top: 2px;
  display: flex;
  gap: 3px;
  border-top: 1px solid #bbb;
}
.status p {
  flex: 1;
  padding-left: 1px;
  line-height: 16px;
}
.status i {
  width: 74px;
  height: 16px;
  border: 1px solid #aaa;
  border-color: #aaa #fff #fff #aaa;
}
.status .wide {
  width: 123px;
}
.status svg {
  width: 14px;
  height: 14px;
  align-self: flex-end;
}
.pointer {
  position: absolute;
  z-index: 2;
  left: 974px;
  top: 77px;
  width: 14px;
  height: 22px;
}
```
